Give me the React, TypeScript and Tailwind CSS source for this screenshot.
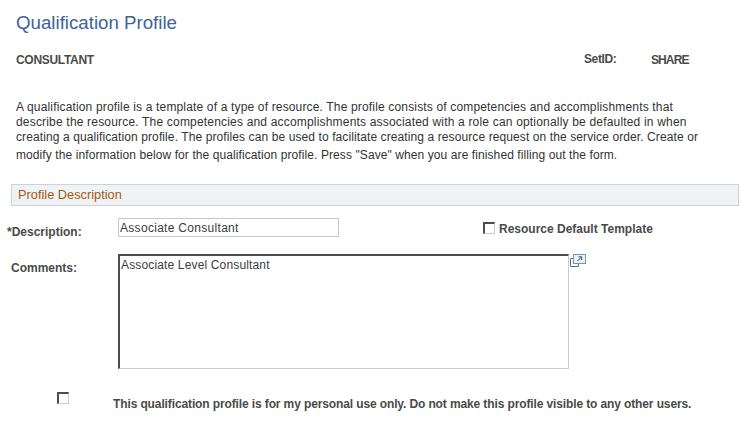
const font = "font-['Liberation_Sans',Arial,sans-serif]";

function CheckBox() {
  return (
    <span className="block h-3 w-3 shrink-0 border border-t-2 border-l-2 border-t-[#4d4d4d] border-l-[#4d4d4d] border-r-[#cfcac4] border-b-[#cfcac4] bg-white" />
  );
}

function ExpandIcon() {
  return (
    <svg width="16" height="14" viewBox="0 0 16 14" className="ml-[1px] shrink-0" aria-hidden>
      <path d="M3.5 4.5H0.5V12.5H8.5V10" fill="none" stroke="#5f6b78" strokeWidth="1" />
      <rect x="3.5" y="0.5" width="12" height="9" fill="#eaf1f8" stroke="#7096c0" />
      <path d="M7.5 7L11.5 3M8.5 2.8H11.7V6" fill="none" stroke="#3d4f63" strokeWidth="1" />
    </svg>
  );
}

export default function App() {
  return (
    <div className={`${font} h-[434px] w-[755px] overflow-hidden bg-white text-[12px] text-[#3c3c3c]`}>
      <h1 className="pl-4 pt-[12px] text-[18.7px] leading-[22px] font-normal text-[#3d6399]">Qualification Profile</h1>

      <div className="mt-[18px] flex h-[15px] items-start pl-4 leading-[15px] font-bold text-[#4a4a4a]">
        <span className="mt-[1px] w-[568px] tracking-[-0.3px]">CONSULTANT</span>
        <span className="w-[67px] tracking-[-0.4px]">SetID:</span>
        <span className="mt-[1px] tracking-[-0.9px]">SHARE</span>
      </div>

      <div className="mt-[32px] w-[720px] pl-4 leading-[16px] text-[#333333]">
        <p className="tracking-[0.16px]">A qualification profile is a template of a type of resource. The profile consists of competencies and accomplishments that</p>
        <p className="-mt-[1px] tracking-[0.185px]">describe the resource. The competencies and accomplishments associated with a role can optionally be defaulted in when</p>
        <p className="-mt-[1px] tracking-[0.1px]">creating a qualification profile. The profiles can be used to facilitate creating a resource request on the service order. Create or</p>
        <p className="mt-[2px] tracking-[0.09px]">modify the information below for the qualification profile. Press "Save" when you are finished filling out the form.</p>
      </div>

      <div className="mt-[21px] ml-[11px] flex h-[22px] w-[728px] items-center border border-[#cbd3da] bg-[#f0f3f5] pl-[6px] text-[12.8px] text-[#a8590f]">
        Profile Description
      </div>

      <div className="mt-[12px] flex h-[20px] items-start">
        <label className="w-[118px] pl-[7px] pt-[5px] font-bold text-[#4a4a4a]">*Description:</label>
        <input
          readOnly
          value="Associate Consultant"
          className="h-[19px] w-[221px] border border-[#c9c9c9] bg-white px-[1px] pt-[1px] text-[12px] tracking-[0.3px] text-[#3c3c3c] outline-none"
        />
        <div className="ml-[144px] flex items-start gap-[4px]">
          <span className="mt-[4px]">
            <CheckBox />
          </span>
          <span className="pt-[2px] font-bold text-[#4a4a4a]">Resource Default Template</span>
        </div>
      </div>

      <div className="mt-[16px] flex items-start">
        <label className="w-[118px] pl-[11px] pt-[5px] font-bold text-[#4a4a4a]">Comments:</label>
        <textarea
          readOnly
          value="Associate Level Consultant"
          className="h-[115px] w-[451px] resize-none border border-t-2 border-l-2 border-t-[#4d4d4d] border-l-[#4d4d4d] border-r-[#cfcac4] border-b-[#cfcac4] bg-white px-[1px] pt-[1px] pb-0 text-[12px] leading-[16px] tracking-[0.15px] text-[#3c3c3c] outline-none"
        />
        <ExpandIcon />
      </div>

      <div className="mt-[23px] flex items-start">
        <span className="ml-[57px] w-[56px]">
          <CheckBox />
        </span>
        <span className="pt-[3px] font-bold tracking-[-0.12px] text-[#4a4a4a]">
          This qualification profile is for my personal use only. Do not make this profile visible to any other users.
        </span>
      </div>
    </div>
  );
}
